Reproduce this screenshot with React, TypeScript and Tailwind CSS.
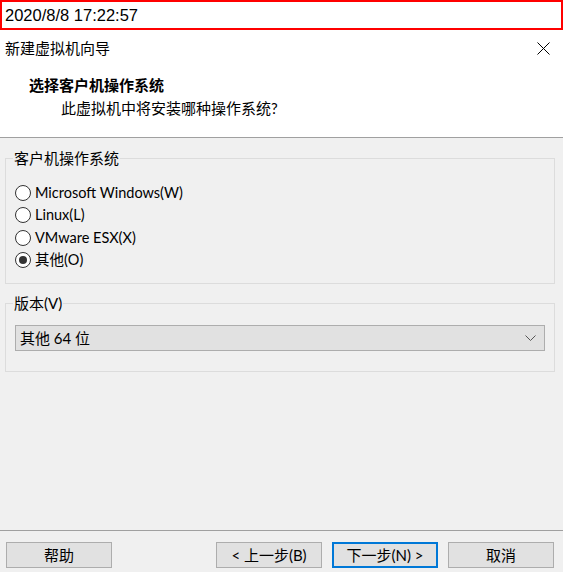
import React from "react";

const FONT = { fontFamily: 'Lato, "Noto Sans CJK SC", sans-serif' };

function Radio({ checked, label }: { checked?: boolean; label: string }) {
  return (
    <div className="flex items-center h-[22.5px]">
      <span className="w-[16px] h-[16px] rounded-full border border-[#333333] bg-white flex items-center justify-center">
        {checked && <span className="w-[8px] h-[8px] rounded-full bg-[#333333]" />}
      </span>
      <span className="ml-[4px] text-[14.5px] leading-[20px] text-black">{label}</span>
    </div>
  );
}

function Btn({ children, primary }: { children: React.ReactNode; primary?: boolean }) {
  return (
    <div
      className={
        "w-[106px] h-[26px] flex items-center justify-center text-[15px] text-black bg-[#e1e1e1] " +
        (primary ? "border-2 border-[#0078d7]" : "border border-[#adadad]")
      }
    >
      {children}
    </div>
  );
}

export default function App() {
  return (
    <div className="w-[563px] h-[572px] bg-[#f0f0f0] flex flex-col overflow-hidden" style={FONT}>
      <div className="h-[30px] shrink-0 border-2 border-[#ff0000] bg-white flex items-center pl-[3px]">
        <span className="text-[16.5px] text-black" style={{ fontFamily: '"Liberation Sans", Arial, sans-serif' }}>
          2020/8/8 17:22:57
        </span>
      </div>
      <div className="h-[108px] shrink-0 bg-white border-b border-[#a0a0a0] flex flex-col">
        <div className="h-[36px] flex items-center justify-between pl-[5px] pr-[13px]">
          <span className="text-[15px] text-black">新建虚拟机向导</span>
          <svg width="13" height="13" viewBox="0 0 13 13">
            <path d="M0.5 0.5 L12.5 12.5 M12.5 0.5 L0.5 12.5" stroke="#000" strokeWidth="1" />
          </svg>
        </div>
        <div className="mt-[9px] pl-[29px] text-[15px] leading-[20px] font-bold text-black">选择客户机操作系统</div>
        <div className="mt-[3px] pl-[61px] text-[15px] leading-[20px] text-black">此虚拟机中将安装哪种操作系统?</div>
      </div>
      <div className="flex-1 flex flex-col">
        <fieldset className="mt-[10px] ml-[5px] w-[550px] h-[136px] border border-[#dcdcdc] pl-[9px] pr-[8px] pb-0 pt-0 m-0">
          <legend className="px-[1px] -ml-[2px] text-[15px] leading-[20px] text-black">客户机操作系统</legend>
          <div className="pt-[13.5px] flex flex-col">
            <Radio label="Microsoft Windows(W)" />
            <Radio label="Linux(L)" />
            <Radio label="VMware ESX(X)" />
            <Radio checked label="其他(O)" />
          </div>
        </fieldset>
        <fieldset className="mt-[9px] ml-[5px] w-[550px] h-[79px] border border-[#dcdcdc] pl-[8px] pr-[8px] pb-0 pt-0">
          <legend className="px-[1px] -ml-[1px] text-[15px] leading-[20px] text-black">版本(V)</legend>
          <div className="mt-[12px] ml-[1px] w-[530px] h-[26px] bg-[#e1e1e1] border border-[#adadad] flex items-center justify-between pl-[4px] pr-[8px]">
            <span className="text-[15px] leading-[20px] text-black">其他 64 位</span>
            <svg width="11" height="6" viewBox="0 0 11 6">
              <path d="M0.5 0.5 L5.5 5.5 L10.5 0.5" stroke="#555" strokeWidth="1" fill="none" />
            </svg>
          </div>
        </fieldset>
      </div>
      <div className="h-[42px] shrink-0 border-t border-[#a0a0a0] flex items-start pt-[11px] pl-[6px] pr-[9px]">
        <Btn>帮助</Btn>
        <div className="ml-auto flex gap-[10px]">
          <Btn>&lt; 上一步(B)</Btn>
          <Btn primary>下一步(N) &gt;</Btn>
          <Btn>取消</Btn>
        </div>
      </div>
    </div>
  );
}
